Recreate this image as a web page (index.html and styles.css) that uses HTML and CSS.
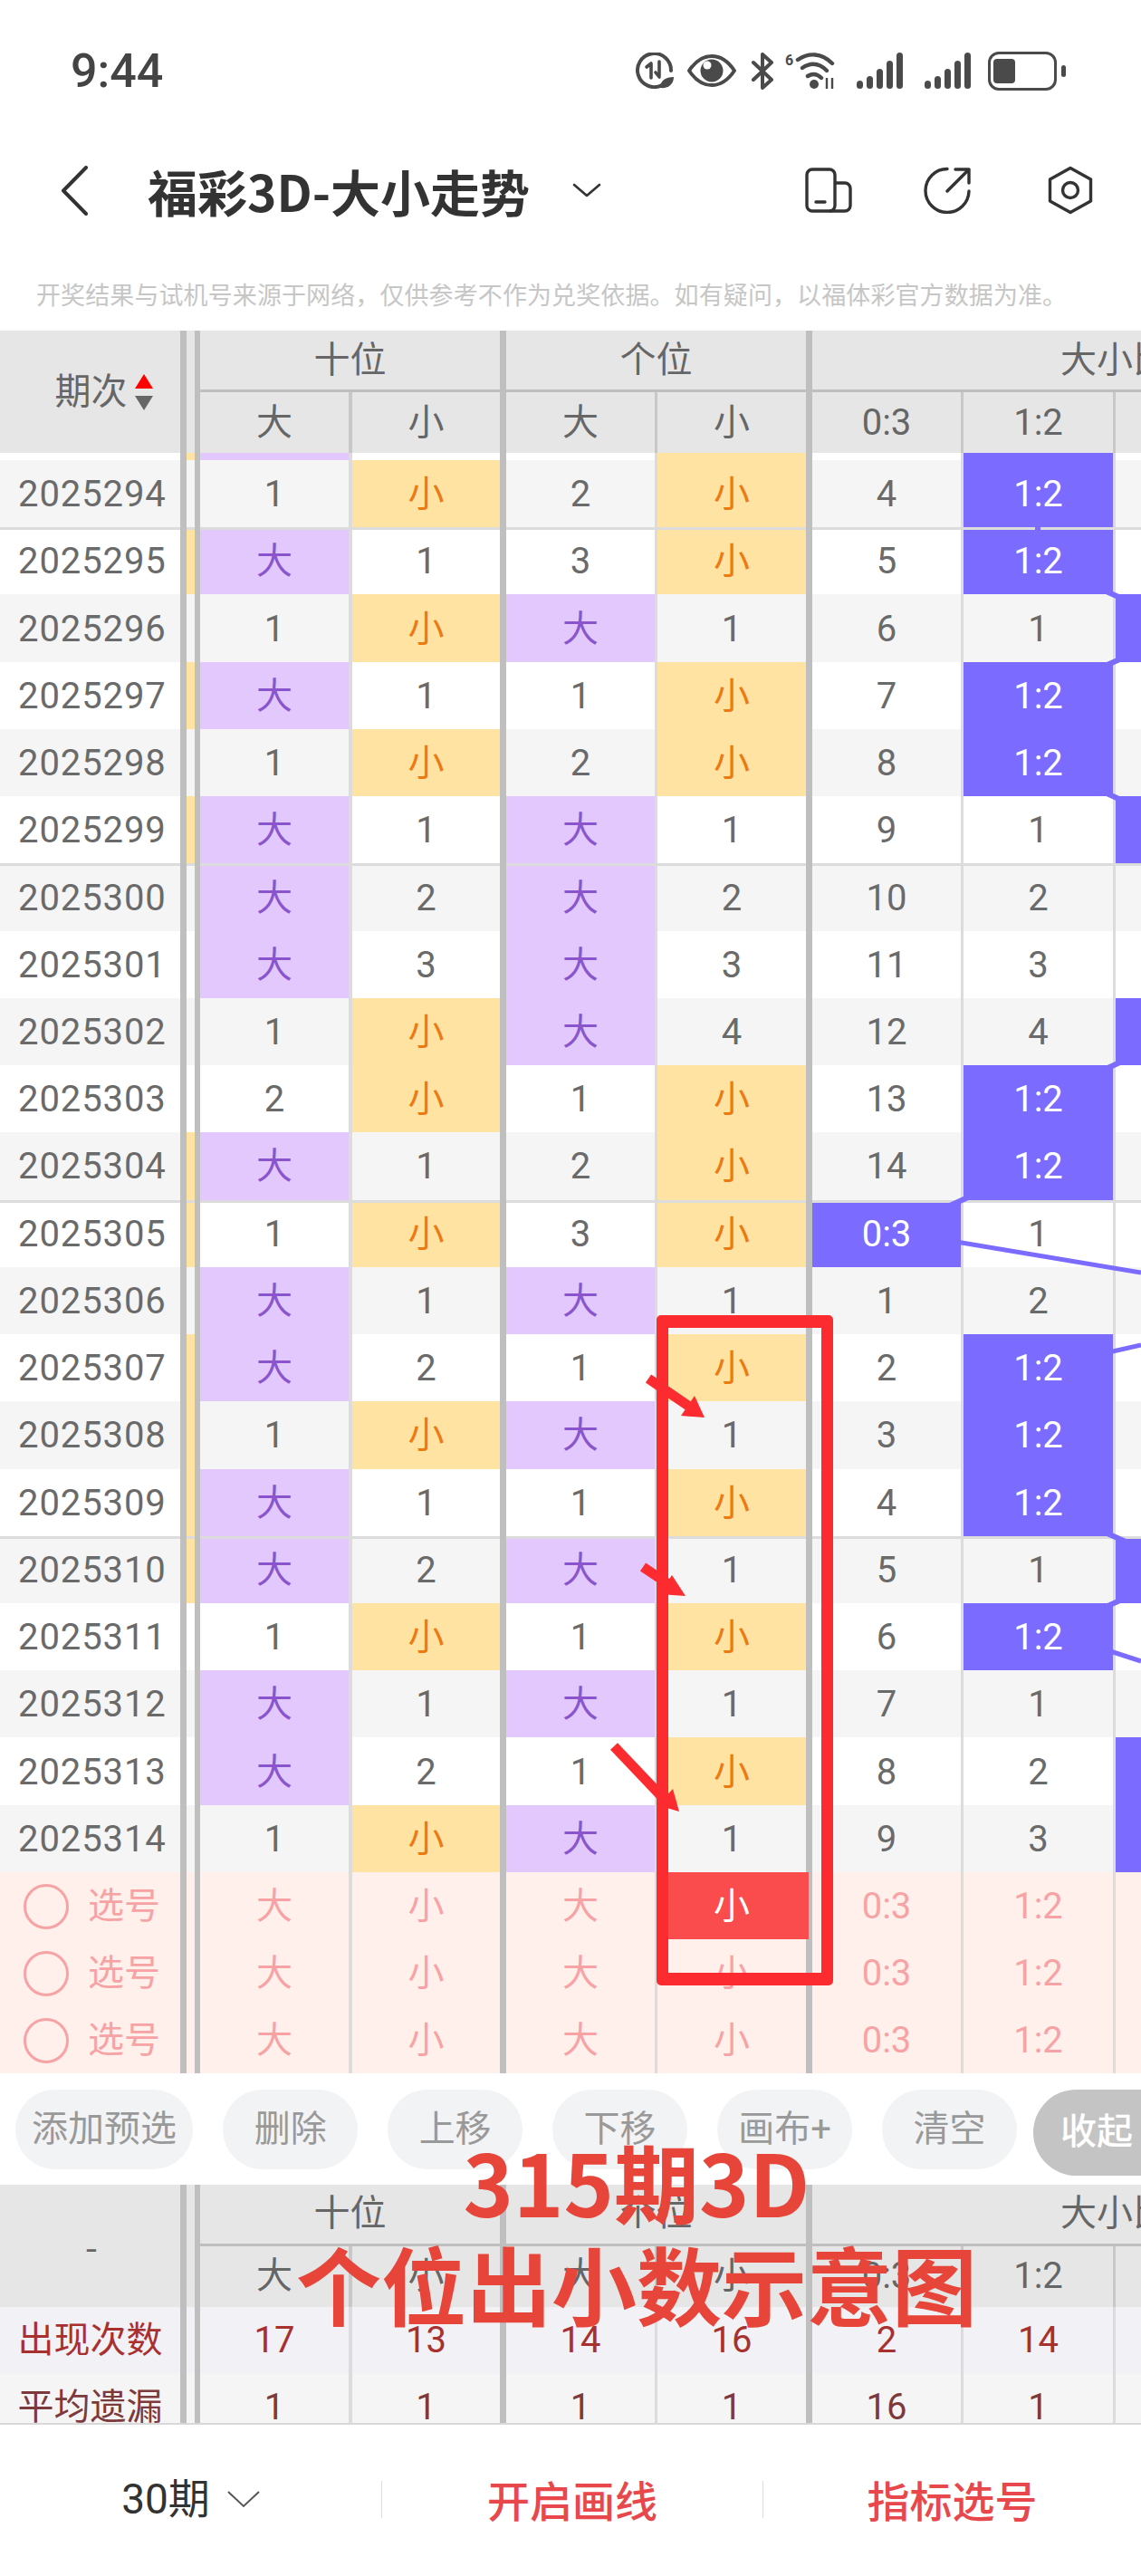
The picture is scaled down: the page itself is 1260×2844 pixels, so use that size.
FILE: index.html
```html
<!DOCTYPE html>
<html lang="zh-CN">
<head>
<meta charset="utf-8">
<title>福彩3D-大小走势</title>
<link rel="stylesheet" href="styles.css">
</head>
<body>
<div class="page">
  <header class="status">
    <span class="time">9:44</span>
    <div class="status-icons">
      <svg class="ic-data" viewBox="0 0 44 40"><path d="M30 36A18.5 18.5 0 1 1 40 20" fill="none" stroke="#4a4a4a" stroke-width="4" stroke-linecap="round"/><path d="M13 16l5-4v16M27 10v16m-4-4l4 5" fill="none" stroke="#4a4a4a" stroke-width="3.6" stroke-linecap="round" stroke-linejoin="round"/><path d="M28 39c0-8 6-12 15-12 0 8-6 13-15 12z" fill="#4a4a4a"/></svg>
      <svg class="ic-eye" viewBox="0 0 54 36"><path d="M2 18C10 6 18 2 27 2s17 4 25 16c-8 12-16 16-25 16S10 30 2 18z" fill="none" stroke="#4a4a4a" stroke-width="4" stroke-linejoin="round"/><circle cx="27" cy="18" r="12.500" fill="#4a4a4a"/><circle cx="22" cy="12" r="4.500" fill="#fff"/></svg>
      <svg class="ic-bt" viewBox="0 0 26 41"><path d="M3 11l20 19-10 9V22M3 30l20-19L13 2v17" fill="none" stroke="#4a4a4a" stroke-width="4" stroke-linejoin="round" stroke-linecap="round"/></svg>
      <div class="wifi">
        <span class="wifi-six">6</span>
        <svg class="ic-wifi" viewBox="0 0 46 41"><path d="M4 8C16 0 30 0 42 12M9 17c9-6 18-6 27 3M15 26c5-3 10-3 15 2" fill="none" stroke="#4a4a4a" stroke-width="4.400" stroke-linecap="round"/><circle cx="22" cy="35" r="5" fill="#4a4a4a"/><path d="M36 28v12M42 28v12" stroke="#4a4a4a" stroke-width="2.400"/></svg>
      </div>
      <div class="signal"><i class="b1"></i><i class="b2"></i><i class="b3"></i><i class="b4"></i><i class="b5"></i></div>
      <div class="signal"><i class="b1"></i><i class="b2"></i><i class="b3"></i><i class="b4"></i><i class="b5"></i></div>
      <div class="battery"><div class="battery-body"><div class="battery-fill"></div></div><div class="battery-nub"></div></div>
    </div>
  </header>

  <nav class="nav">
    <svg class="ic-back" viewBox="0 0 32 55"><path d="M29 2L4 27.500 29 53" fill="none" stroke="#333" stroke-width="4" stroke-linecap="round" stroke-linejoin="round"/></svg>
    <h1 class="title">福彩3D-大小走势</h1>
    <svg class="ic-down" viewBox="0 0 32 16"><path d="M2 2l14 12L30 2" fill="none" stroke="#333" stroke-width="2.600" stroke-linecap="round" stroke-linejoin="round"/></svg>
    <div class="nav-actions">
      <svg class="ic-split" viewBox="0 0 52 50"><rect x="2" y="2" width="31" height="46" rx="6" fill="none" stroke="#333" stroke-width="3.400"/><path d="M33 17h11a6 6 0 0 1 6 6v19a6 6 0 0 1-6 6H27" fill="none" stroke="#333" stroke-width="3.400"/><path d="M12 38h10" stroke="#333" stroke-width="3.400" stroke-linecap="round"/></svg>
      <svg class="ic-share" viewBox="0 0 52 52"><path d="M26 2.500A24 24 0 1 0 50 27" fill="none" stroke="#333" stroke-width="3.400" stroke-linecap="round"/><path d="M26 27L50 3M35 3h15v15" fill="none" stroke="#333" stroke-width="3.400" stroke-linecap="round" stroke-linejoin="round"/></svg>
      <svg class="ic-hex" viewBox="0 0 50 54"><path d="M25 2.500L47.500 15v24L25 51.500 2.500 39V15z" fill="none" stroke="#333" stroke-width="3.400" stroke-linejoin="round"/><circle cx="25" cy="27" r="8.500" fill="none" stroke="#333" stroke-width="3.400"/></svg>
    </div>
  </nav>

  <p class="notice">开奖结果与试机号来源于网络，仅供参考不作为兑奖依据。如有疑问，以福体彩官方数据为准。</p>

  <section class="table">
    <div class="thead">
      <div class="th th-period">期次
        <svg class="ic-sort" viewBox="0 0 20 40"><path d="M10 0l10 16H0z" fill="#f00"/><path d="M0 24h20L10 40z" fill="#666"/></svg>
      </div>
      <div class="th th-strip"></div>
      <div class="th group g-ten">十位</div>
      <div class="th group g-one">个位</div>
      <div class="th group g-ratio">大小比</div>
      <div class="th thin">大</div><div class="th thick">小</div>
      <div class="th thin3">大</div><div class="th thick">小</div>
      <div class="th thin3">0:3</div><div class="th thin3">1:2</div><div class="th">2:1</div>
    </div>

    <div class="row partial"><div></div><div class="y"></div><div class="v"></div><div></div><div></div><div class="y"></div><div></div><div class="p"></div><div></div></div>

    <div class="row"><div class="period">2025294</div><div></div><div>1</div><div class="y">小</div><div>2</div><div class="y">小</div><div>4</div><div class="p">1:2</div><div></div></div>
    <div class="row odd sep"><div class="period">2025295</div><div class="y"></div><div class="v">大</div><div>1</div><div>3</div><div class="y">小</div><div>5</div><div class="p">1:2</div><div></div></div>
    <div class="row"><div class="period">2025296</div><div></div><div>1</div><div class="y">小</div><div class="v">大</div><div>1</div><div>6</div><div>1</div><div class="p"></div></div>
    <div class="row odd"><div class="period">2025297</div><div class="y"></div><div class="v">大</div><div>1</div><div>1</div><div class="y">小</div><div>7</div><div class="p">1:2</div><div></div></div>
    <div class="row"><div class="period">2025298</div><div></div><div>1</div><div class="y">小</div><div>2</div><div class="y">小</div><div>8</div><div class="p">1:2</div><div></div></div>
    <div class="row odd"><div class="period">2025299</div><div class="y"></div><div class="v">大</div><div>1</div><div class="v">大</div><div>1</div><div>9</div><div>1</div><div class="p"></div></div>
    <div class="row sep"><div class="period">2025300</div><div></div><div class="v">大</div><div>2</div><div class="v">大</div><div>2</div><div>10</div><div>2</div><div></div></div>
    <div class="row odd"><div class="period">2025301</div><div></div><div class="v">大</div><div>3</div><div class="v">大</div><div>3</div><div>11</div><div>3</div><div></div></div>
    <div class="row"><div class="period">2025302</div><div></div><div>1</div><div class="y">小</div><div class="v">大</div><div>4</div><div>12</div><div>4</div><div class="p"></div></div>
    <div class="row odd"><div class="period">2025303</div><div></div><div>2</div><div class="y">小</div><div>1</div><div class="y">小</div><div>13</div><div class="p">1:2</div><div></div></div>
    <div class="row"><div class="period">2025304</div><div class="y"></div><div class="v">大</div><div>1</div><div>2</div><div class="y">小</div><div>14</div><div class="p">1:2</div><div></div></div>
    <div class="row odd sep"><div class="period">2025305</div><div class="y"></div><div>1</div><div class="y">小</div><div>3</div><div class="y">小</div><div class="p">0:3</div><div>1</div><div></div></div>
    <div class="row"><div class="period">2025306</div><div></div><div class="v">大</div><div>1</div><div class="v">大</div><div>1</div><div>1</div><div>2</div><div></div></div>
    <div class="row odd"><div class="period">2025307</div><div class="y"></div><div class="v">大</div><div>2</div><div>1</div><div class="y">小</div><div>2</div><div class="p">1:2</div><div></div></div>
    <div class="row"><div class="period">2025308</div><div class="y"></div><div>1</div><div class="y">小</div><div class="v">大</div><div>1</div><div>3</div><div class="p">1:2</div><div></div></div>
    <div class="row odd"><div class="period">2025309</div><div class="y"></div><div class="v">大</div><div>1</div><div>1</div><div class="y">小</div><div>4</div><div class="p">1:2</div><div></div></div>
    <div class="row sep"><div class="period">2025310</div><div class="y"></div><div class="v">大</div><div>2</div><div class="v">大</div><div>1</div><div>5</div><div>1</div><div class="p"></div></div>
    <div class="row odd"><div class="period">2025311</div><div></div><div>1</div><div class="y">小</div><div>1</div><div class="y">小</div><div>6</div><div class="p">1:2</div><div></div></div>
    <div class="row"><div class="period">2025312</div><div></div><div class="v">大</div><div>1</div><div class="v">大</div><div>1</div><div>7</div><div>1</div><div></div></div>
    <div class="row odd"><div class="period">2025313</div><div></div><div class="v">大</div><div>2</div><div>1</div><div class="y">小</div><div>8</div><div>2</div><div class="p"></div></div>
    <div class="row"><div class="period">2025314</div><div></div><div>1</div><div class="y">小</div><div class="v">大</div><div>1</div><div>9</div><div>3</div><div class="p"></div></div>

    <div class="row pick"><div class="pick-label"><span class="radio"></span>选号</div><div></div><div>大</div><div>小</div><div>大</div><div class="picked">小</div><div>0:3</div><div>1:2</div><div></div></div>
    <div class="row pick"><div class="pick-label"><span class="radio"></span>选号</div><div></div><div>大</div><div>小</div><div>大</div><div>小</div><div>0:3</div><div>1:2</div><div></div></div>
    <div class="row pick"><div class="pick-label"><span class="radio"></span>选号</div><div></div><div>大</div><div>小</div><div>大</div><div>小</div><div>0:3</div><div>1:2</div><div></div></div>
  </section>

  <div class="toolbar">
    <button class="tool wide">添加预选</button>
    <button class="tool">删除</button>
    <button class="tool">上移</button>
    <button class="tool">下移</button>
    <button class="tool">画布+</button>
    <button class="tool">清空</button>
    <button class="tool collapse">收起</button>
  </div>

  <section class="table stats">
    <div class="thead">
      <div class="th th-period th-dash">-</div>
      <div class="th th-strip"></div>
      <div class="th group g-ten">十位</div>
      <div class="th group g-one">个位</div>
      <div class="th group g-ratio">大小比</div>
      <div class="th thin">大</div><div class="th thick">小</div>
      <div class="th thin3">大</div><div class="th thick">小</div>
      <div class="th thin3">0:3</div><div class="th thin3">1:2</div><div class="th">2:1</div>
    </div>
    <div class="row count"><div class="stat-name">出现次数</div><div></div><div>17</div><div>13</div><div>14</div><div>16</div><div>2</div><div>14</div><div></div></div>
    <div class="row miss"><div class="stat-name">平均遗漏</div><div></div><div>1</div><div>1</div><div>1</div><div>1</div><div>16</div><div>1</div><div></div></div>
  </section>

  <footer class="bottom">
    <div class="bottom-item range">30期
      <svg class="ic-range" viewBox="0 0 36 20"><path d="M1 2l17 16L35 2" fill="none" stroke="#555" stroke-width="2"/></svg>
    </div>
    <div class="bottom-item red">开启画线</div>
    <div class="bottom-item red">指标选号</div>
  </footer>

  <svg class="trend" viewBox="0 0 1260 2844">
    <path d="M1146 578v9M1200 643.400L1250 665.500M1250 722L1200 744M1200 866L1250 888.500M1250 1167L1200 1189.500M1100 1308L1030 1339.500M1200 1683L1250 1705M1250 1761L1200 1783.500" fill="none" stroke="#7b6bff" stroke-width="6"/>
    <path d="M1050 1370L1260 1405M1220 1494L1260 1485M1220 1821L1260 1834" fill="none" stroke="#7b6bff" stroke-width="5"/>
  </svg>

  <div class="marker-box"></div>
  <svg class="arrows" viewBox="0 0 1260 2844">
    <path d="M716 1522L760 1552" stroke="#fb2b30" stroke-width="11" fill="none"/>
    <path d="M778 1565L767 1541 752 1563z" fill="#fb2b30"/>
    <path d="M710 1730L740 1750" stroke="#fb2b30" stroke-width="11" fill="none"/>
    <path d="M757 1762L742 1739 728 1760z" fill="#fb2b30"/>
    <path d="M678 1928L735 1988" stroke="#fb2b30" stroke-width="11" fill="none"/>
    <path d="M750 2000L743 1975 726 1993z" fill="#fb2b30"/>
  </svg>
  <div class="poster-text">315期3D<br>个位出小数示意图</div>
</div>
</body>
</html>
```

FILE: styles.css
```css
* { box-sizing: border-box; }
html, body { margin: 0; padding: 0; }
body {
  width: 1260px;
  height: 2844px;
  overflow: hidden;
  background: #fff;
  font-family: Roboto, "Noto Sans CJK SC", sans-serif;
  color: #666;
}
.page { position: relative; width: 1260px; height: 2844px; overflow: hidden; }

/* status bar */
.status { height: 150px; padding: 56px 83px 0 78px; display: flex; align-items: flex-start; justify-content: space-between; }
.time { font-size: 52px; line-height: 46px; font-weight: 500; color: #444; }
.status-icons { display: flex; align-items: center; height: 44px; }
.ic-data { width: 44px; height: 40px; margin-left: 0; }
.ic-eye { width: 54px; height: 36px; margin-left: 14px; }
.ic-bt { width: 26px; height: 41px; margin-left: 16px; }
.wifi { display: flex; align-items: flex-start; margin-left: 12px; height: 41px; }
.wifi-six { font-size: 16px; line-height: 18px; font-weight: 700; color: #4a4a4a; width: 10px; }
.ic-wifi { width: 46px; height: 41px; }
.signal { display: flex; align-items: flex-end; gap: 4px; height: 40px; width: 52px; margin-left: 23px; }
.signal + .signal { margin-left: 23px; }
.signal i { display: block; width: 7px; border-radius: 3.5px; background: #4a4a4a; }
.signal .b1 { height: 9px; }
.signal .b2 { height: 14px; }
.signal .b3 { height: 22px; }
.signal .b4 { height: 31px; }
.signal .b5 { height: 40px; }
.battery { display: flex; align-items: center; margin-left: 18px; }
.battery-body { width: 76px; height: 43px; border: 3px solid #4a4a4a; border-radius: 12px; padding: 5px 3px; }
.battery-fill { width: 24px; height: 100%; border-radius: 4px; background: #4a4a4a; }
.battery-nub { width: 5px; height: 13px; border-radius: 3px; background: #4a4a4a; margin-left: 5px; }

/* nav */
.nav { height: 120px; display: flex; align-items: center; padding: 0 53px 0 66px; }
.ic-back { width: 32px; height: 55px; }
.title { margin: 0 0 0 65px; font-size: 55px; line-height: 66px; font-weight: 700; color: #333; font-family: "Noto Sans CJK SC", sans-serif; white-space: nowrap; }
.ic-down { width: 32px; height: 16px; margin-left: 47px; }
.nav-actions { margin-left: auto; display: flex; align-items: center; gap: 79px; }
.ic-split { width: 52px; height: 50px; }
.ic-share { width: 52px; height: 52px; margin-right: -2px; }
.ic-hex { width: 50px; height: 54px; margin-left: 8px; }

.notice { margin: 0; height: 95px; padding: 35px 0 0 40px; font-size: 27px; line-height: 40px; letter-spacing: .1px; color: #c6c6c6; white-space: nowrap; font-family: "Noto Sans CJK SC", sans-serif; }

/* table */
.table { width: 1565px; font-size: 40px; line-height: 48px; }
.thead, .row { display: grid; grid-template-columns: 206px 15px 168px 170px 167px 171px 167px 168px 333px; }
.thead { grid-template-rows: 68px 67px; background: #e6e6e6; height: 135px; color: #666; }
.th { display: flex; align-items: center; justify-content: center; }
.th-period { grid-row: 1 / 3; grid-column: 1; border-right: 7px solid #bfbfbf; gap: 8px; padding-left: 30px; }
.th-strip { grid-row: 1 / 3; grid-column: 2; border-right: 6px solid #bfbfbf; }
.ic-sort { width: 20px; height: 40px; }
.group { border-bottom: 3px solid #bfbfbf; }
.g-ten { grid-column: 3 / 5; border-right: 7px solid #bfbfbf; }
.g-one { grid-column: 5 / 7; border-right: 7px solid #bfbfbf; }
.g-ratio { grid-column: 7 / 10; }
.thin { border-right: 4px solid #c8c8c8; }
.thin3 { border-right: 3px solid #c8c8c8; }
.thick { border-right: 7px solid #bfbfbf; }

.row { height: 74.24px; background: #f5f5f5; color: #6a6a6a; }
.row.odd { background: #fff; }
.row > div { display: flex; align-items: center; justify-content: center; padding-top: 2px; }
.row > :nth-child(1) { border-right: 7px solid #bfbfbf; }
.row > :nth-child(2) { border-right: 6px solid #bfbfbf; }
.row > :nth-child(3) { border-right: 4px solid #dcdcdc; }
.row > :nth-child(4) { border-right: 7px solid #bfbfbf; }
.row > :nth-child(5) { border-right: 3px solid #dcdcdc; }
.row > :nth-child(6) { border-right: 7px solid #bfbfbf; }
.row > :nth-child(7) { border-right: 3px solid #dcdcdc; }
.row > :nth-child(8) { border-right: 3px solid #dcdcdc; }
.row.sep > div { box-shadow: inset 0 3px 0 #dcdcdc; }
.row.partial { height: 8px; background: #fff; }
.row.partial > div { padding-top: 0; }
.row > .y { background: #ffe3a3; color: #ec7a12; }
.row > .v { background: #e2c8fd; color: #8a55cc; }
.row > .p { background: #7b6bff; color: #fff; }
.row > .period { justify-content: flex-start; padding-left: 20px; letter-spacing: .9px; }

.row.pick { height: 74px; background: #fff0eb; color: #f7a3a6; }
.row > .pick-label { justify-content: flex-start; padding-left: 26px; gap: 21px; }
.radio { width: 50px; height: 50px; border: 3px solid #f7a3a6; border-radius: 50%; }
.row > .picked { background: linear-gradient(90deg, #fa4b4d 167px, #bfbfbf 167px); border-right: 0; padding-right: 7px; color: #fff; }

/* toolbar */
.toolbar { height: 123px; padding: 18px 0 0 17px; display: flex; align-items: flex-start; gap: 33.3px; }
.tool { flex: none; width: 148.7px; height: 88px; padding: 0; border: 0; border-radius: 44px; background: #f2f3f5; color: #999; font: 40px/48px Roboto, "Noto Sans CJK SC", sans-serif; }
.tool.wide { width: 196px; }
.tool.collapse { width: 160px; height: 95px; border-radius: 48px 0 0 48px; margin-left: -15.3px; padding-right: 20px; background: #c4c4c4; color: #fff; font-weight: 500; }

/* stats */
.stats { height: 265px; overflow: hidden; border-bottom: 2px solid #d8d8d8; }
.th-dash { padding: 0 0 0 3px; font-family: "Noto Sans CJK SC", sans-serif; }
.row.count { background: #f1f1f6; color: #a8302f; }
.row.miss { background: #f5f5f5; color: #7d3a3c; }
.row.count > div, .row.miss > div { padding-top: 0; }

/* bottom */
.bottom { height: 167px; display: grid; grid-template-columns: 421px 421px 418px; align-items: center; font-size: 46px; line-height: 56px; padding-bottom: 2px; }
.bottom-item { height: 41px; display: flex; align-items: center; justify-content: center; }
.bottom-item + .bottom-item { border-left: 1px solid #ddd; }
.range { color: #333; gap: 19px; }
.ic-range { width: 36px; height: 20px; }
.red { color: #e8484b; font-weight: 500; font-size: 47px; font-family: "Noto Sans CJK SC", sans-serif; }

/* overlays */
.trend, .arrows { position: absolute; left: 0; top: 0; width: 1260px; height: 2844px; pointer-events: none; }
.marker-box { position: absolute; left: 725px; top: 1452px; width: 195px; height: 740px; border: solid #fb2b30; border-width: 14px 13px; border-radius: 5px; }
.poster-text { position: absolute; left: 300px; top: 2351px; width: 806px; text-align: center; font-family: "Noto Sans CJK SC", sans-serif; font-weight: 700; font-size: 94px; line-height: 113px; color: #e8453a; white-space: nowrap; }
```
